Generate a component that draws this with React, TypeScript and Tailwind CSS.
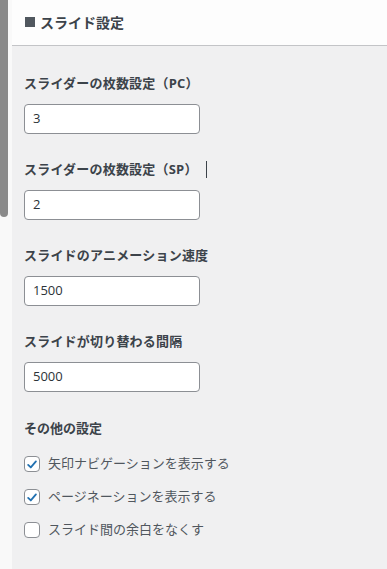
const font = "font-['Open_Sans','Noto_Sans_CJK_JP',sans-serif]";

function Field({ label, value, caret = false }: { label: string; value: string; caret?: boolean }) {
  return (
    <div className="flex flex-col">
      <div className="flex h-[20px] items-center text-[13px] font-bold leading-[20px] tracking-[0.2px] text-[#3c434a]">
        {label}
        {caret && <span className="ml-[8px] inline-block h-[17px] w-px bg-[#3c434a]" />}
      </div>
      <div className="mt-[11px] flex h-[30px] w-[176px] items-center rounded-[4px] border border-[#8c8f94] bg-white px-[8px] text-[13px] text-[#2c3338]">
        {value}
      </div>
    </div>
  );
}

function Check({ label, checked }: { label: string; checked: boolean }) {
  return (
    <div className="flex h-[24px] items-center gap-[8px]">
      <span className="flex h-[16px] w-[16px] items-center justify-center rounded-[4px] border border-[#8c8f94] bg-white">
        {checked && (
          <svg viewBox="0 0 20 20" className="h-[17px] w-[17px]">
            <path d="M4.5 10.5 L8.3 14.2 L15.6 5.6" fill="none" stroke="#2271b1" strokeWidth="2.6" strokeLinecap="round" strokeLinejoin="round" />
          </svg>
        )}
      </span>
      <span className="text-[13px] text-[#50575e]">{label}</span>
    </div>
  );
}

export default function App() {
  return (
    <div className={`flex h-[569px] w-[387px] overflow-hidden ${font}`}>
      <div className="w-[12px] shrink-0 bg-[#f9f9f9]">
        <div className="h-[217px] w-[8px] rounded-b-[4px] bg-[#8a8a8a]" />
      </div>
      <div className="flex flex-1 flex-col bg-[#f0f0f1]">
        <div className="flex h-[46px] shrink-0 items-center gap-[5px] border-b border-[#c3c4c7] bg-[#fdfdfd] pl-[13px] pb-[1px]">
          <span className="h-[10px] w-[10px] bg-[#50575e]" />
          <span className="text-[14px] font-bold text-[#3c434a]">スライド設定</span>
        </div>
        <div className="flex flex-col gap-[25px] pl-[12px] pt-[27px]">
          <Field label="スライダーの枚数設定（PC）" value="3" />
          <Field label="スライダーの枚数設定（SP）" value="2" caret />
          <Field label="スライドのアニメーション速度" value="1500" />
          <Field label="スライドが切り替わる間隔" value="5000" />
          <div className="mt-[1px] flex flex-col">
            <div className="h-[20px] text-[13px] font-bold leading-[20px] text-[#3c434a]">その他の設定</div>
            <div className="mt-[14px] flex flex-col gap-[9px]">
              <Check label="矢印ナビゲーションを表示する" checked />
              <Check label="ページネーションを表示する" checked />
              <Check label="スライド間の余白をなくす" checked={false} />
            </div>
          </div>
        </div>
      </div>
    </div>
  );
}
